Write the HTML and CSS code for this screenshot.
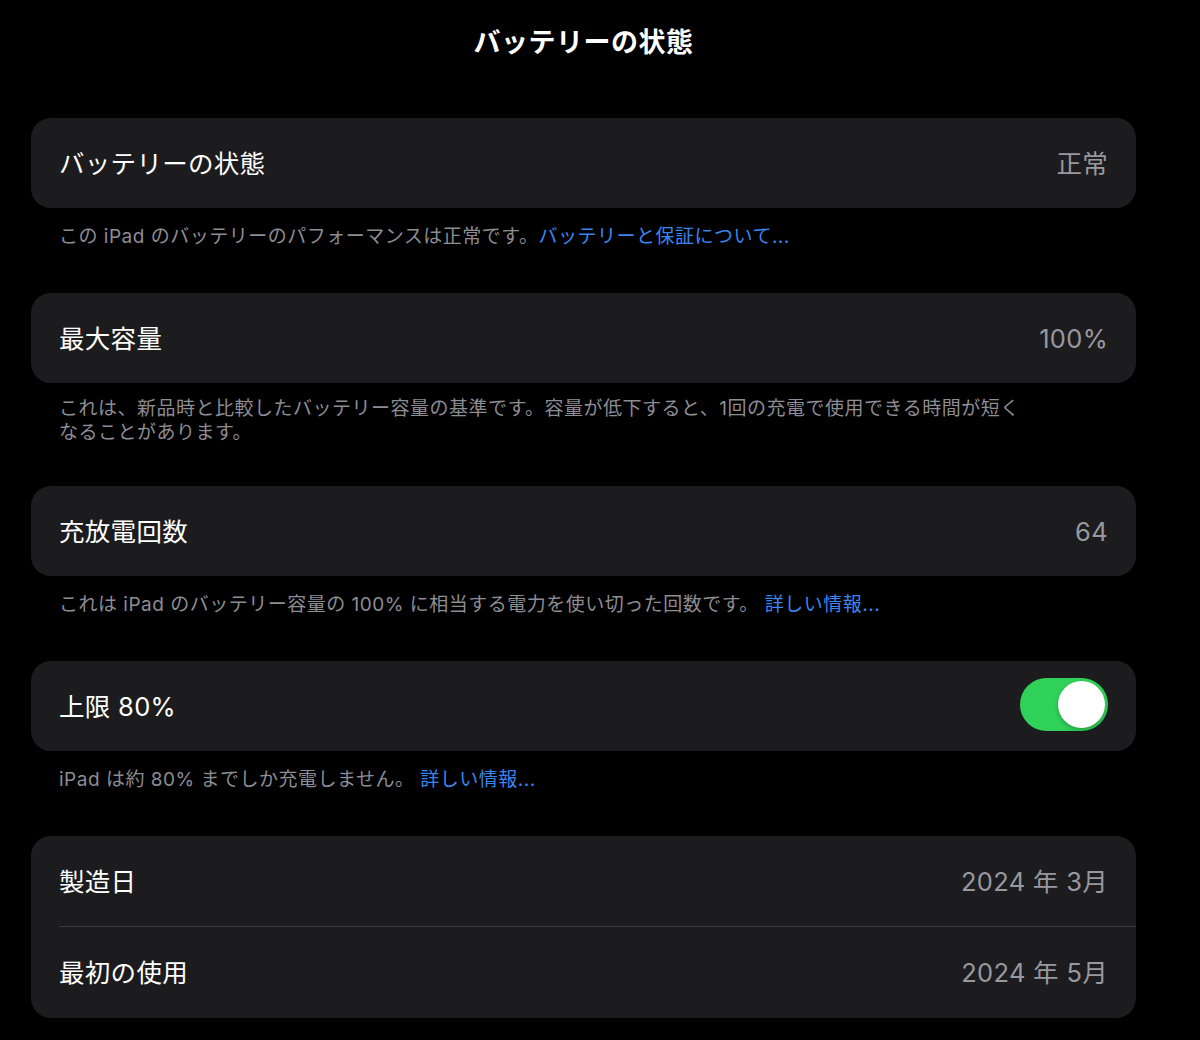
FILE: index.html
```html
<!DOCTYPE html>
<html lang="ja">
<head>
<meta charset="utf-8">
<title>バッテリーの状態</title>
<link rel="stylesheet" href="styles.css">
</head>
<body>
<div class="page">
  <header class="nav">
    <h1 class="nav-title">バッテリーの状態</h1>
  </header>

  <section class="group">
    <div class="card">
      <div class="row">
        <span class="label">バッテリーの状態</span>
        <span class="value">正常</span>
      </div>
    </div>
    <p class="footer">この iPad のバッテリーのパフォーマンスは正常です。<a class="link">バッテリーと保証について...</a></p>
  </section>

  <section class="group">
    <div class="card">
      <div class="row">
        <span class="label">最大容量</span>
        <span class="value value-num">100%</span>
      </div>
    </div>
    <p class="footer footer-narrow">これは、新品時と比較したバッテリー容量の基準です。容量が低下すると、1回の充電で使用できる時間が短くなることがあります。</p>
  </section>

  <section class="group">
    <div class="card">
      <div class="row">
        <span class="label">充放電回数</span>
        <span class="value value-num">64</span>
      </div>
    </div>
    <p class="footer">これは iPad のバッテリー容量の 100% に相当する電力を使い切った回数です。 <a class="link">詳しい情報...</a></p>
  </section>

  <section class="group">
    <div class="card">
      <div class="row">
        <span class="label">上限 80%</span>
        <span class="toggle on"><span class="knob"></span></span>
      </div>
    </div>
    <p class="footer">iPad は約 80% までしか充電しません。 <a class="link">詳しい情報...</a></p>
  </section>

  <section class="group">
    <div class="card">
      <div class="row">
        <span class="label">製造日</span>
        <span class="value">2024 年 3月</span>
      </div>
      <div class="row row-sep">
        <span class="label">最初の使用</span>
        <span class="value">2024 年 5月</span>
      </div>
    </div>
  </section>
</div>
</body>
</html>
```

FILE: styles.css
```css
* { box-sizing: border-box; }
html, body {
  margin: 0;
  padding: 0;
  background: #000;
}
body {
  font-family: "Inter", "Noto Sans CJK JP", sans-serif;
  color: #fff;
  width: 1200px;
  height: 1040px;
  overflow: hidden;
}
.page {
  padding: 0 64px 0 31px;
}
.nav {
  height: 118px;
  display: flex;
  justify-content: center;
  padding-top: 22px;
}
.nav-title {
  margin: 0;
  font-size: 27px;
  font-weight: 700;
  line-height: 42px;
  letter-spacing: 0.5px;
}
.group {
  margin: 0;
}
.card {
  background: #1c1c1e;
  border-radius: 20px;
  overflow: hidden;
}
.row {
  height: 90px;
  display: flex;
  align-items: center;
  justify-content: space-between;
  padding: 0 28px 3px;
  position: relative;
}
.row-sep {
  height: 92px;
}
.row-sep::before {
  content: "";
  position: absolute;
  top: 0;
  left: 28px;
  right: 0;
  height: 1px;
  background: #3a3a3c;
}
.label {
  font-size: 25.5px;
  color: #fff;
  letter-spacing: 0.3px;
}
.value {
  font-size: 25.5px;
  color: #98989e;
  letter-spacing: 0.3px;
}
.value-num {
  padding-top: 4px;
}
.footer {
  margin: 0;
  padding: 17px 28px 44px;
  font-size: 19px;
  line-height: 24px;
  color: #8d8d93;
  letter-spacing: 0.5px;
}
.footer-narrow {
  padding-top: 14px;
  padding-bottom: 41px;
  max-width: 1030px;
}
.link {
  color: #3a86f0;
}
.toggle {
  width: 88px;
  height: 53px;
  border-radius: 27px;
  background: #30d158;
  display: flex;
  align-items: center;
  justify-content: flex-end;
  padding: 0 3px;
}
.knob {
  width: 47px;
  height: 47px;
  border-radius: 50%;
  background: #fff;
  box-shadow: 0 2px 4px rgba(0,0,0,0.25);
}
```
